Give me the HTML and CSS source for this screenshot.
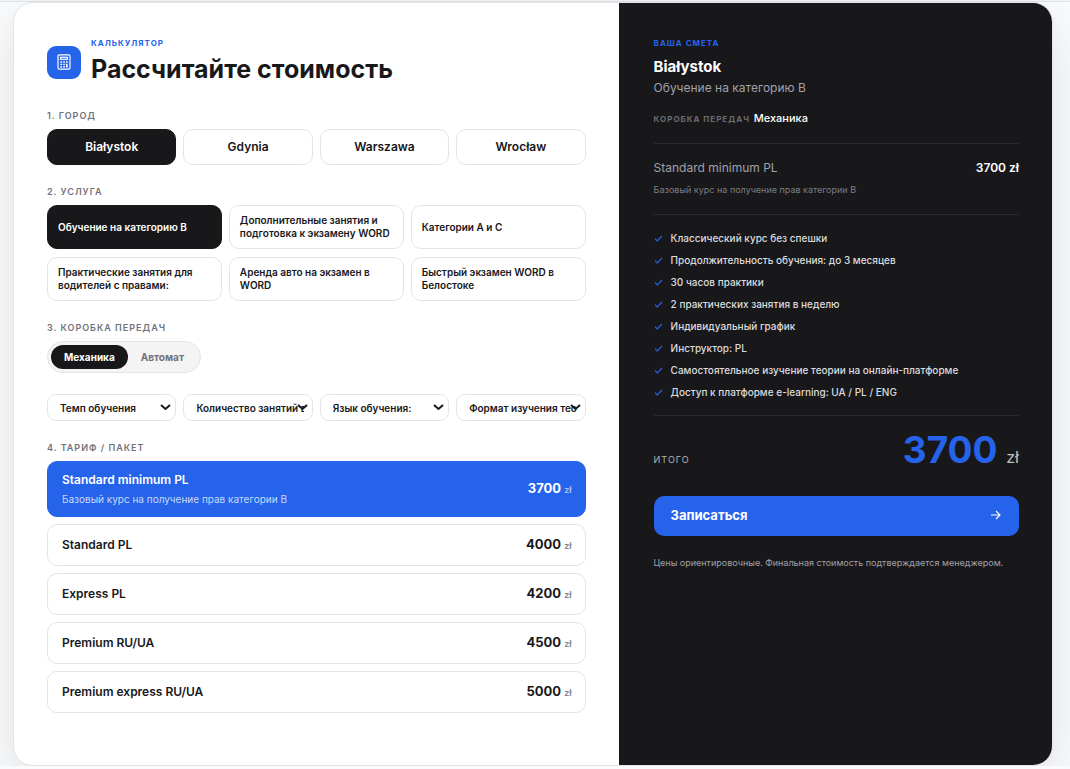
FILE: index.html
```html
<!DOCTYPE html>
<html lang="ru">
<head>
    <meta charset="UTF-8">
    <meta name="viewport" content="width=device-width, initial-scale=1.0">
    <title>Калькулятор стоимости</title>
    <link rel="stylesheet" href="styles.css">
</head>
<body>
    <header class="topbar"></header>

    <main class="calculator">
        <section class="calc-form">
            <div class="calc-head">
                <div class="calc-icon">
                    <svg width="16" height="16" viewBox="0 0 16 16" fill="none" stroke="#fff" stroke-width="1.2">
                        <rect x="2" y=".8" width="12" height="14.4" rx="1.2"/>
                        <rect x="4.5" y="3.3" width="7" height="2"/>
                        <path d="M4.4 8h1.7M7.2 8h1.7M4.4 10.4h1.7M7.2 10.4h1.7M4.4 12.8h1.7M7.2 12.8h1.7M10 8h1.7" stroke-width="1.4"/>
                        <path d="M10.8 9.7v3.8" stroke-width="1.7"/>
                    </svg>
                </div>
                <div>
                    <p class="eyebrow">Калькулятор</p>
                    <h1>Рассчитайте стоимость</h1>
                </div>
            </div>

            <div class="group">
                <h2 class="label">1. Город</h2>
                <div class="cities">
                    <button type="button" class="option active">Białystok</button>
                    <button type="button" class="option">Gdynia</button>
                    <button type="button" class="option">Warszawa</button>
                    <button type="button" class="option">Wrocław</button>
                </div>
            </div>

            <div class="group">
                <h2 class="label">2. Услуга</h2>
                <div class="services">
                    <button type="button" class="option active">Обучение на категорию B</button>
                    <button type="button" class="option">Дополнительные занятия и подготовка к экзамену WORD</button>
                    <button type="button" class="option">Категории A и C</button>
                    <button type="button" class="option">Практические занятия для водителей с правами:</button>
                    <button type="button" class="option">Аренда авто на экзамен в WORD</button>
                    <button type="button" class="option">Быстрый экзамен WORD в Белостоке</button>
                </div>
            </div>

            <div class="group">
                <h2 class="label">3. Коробка передач</h2>
                <div class="gearbox">
                    <button type="button" class="active">Механика</button>
                    <button type="button">Автомат</button>
                </div>
            </div>

            <div class="group filters">
                <div class="select">
                    <select aria-label="Темп обучения"><option>Темп обучения</option></select>
                    <svg width="11" height="7" viewBox="0 0 11 7"><path d="M1 1l4.5 4L10 1"/></svg>
                </div>
                <div class="select">
                    <select aria-label="Количество занятий в неделю"><option>Количество занятий в неделю:</option></select>
                    <svg width="11" height="7" viewBox="0 0 11 7"><path d="M1 1l4.5 4L10 1"/></svg>
                </div>
                <div class="select">
                    <select aria-label="Язык обучения"><option>Язык обучения:</option></select>
                    <svg width="11" height="7" viewBox="0 0 11 7"><path d="M1 1l4.5 4L10 1"/></svg>
                </div>
                <div class="select">
                    <select aria-label="Формат изучения теории"><option>Формат изучения теории:</option></select>
                    <svg width="11" height="7" viewBox="0 0 11 7"><path d="M1 1l4.5 4L10 1"/></svg>
                </div>
            </div>

            <div class="group">
                <h2 class="label">4. Тариф / пакет</h2>
                <div class="plans">
                    <button type="button" class="plan active">
                        <span class="plan-text">
                            <span class="plan-name">Standard minimum PL</span>
                            <span class="plan-note">Базовый курс на получение прав категории B</span>
                        </span>
                        <span class="plan-price">3700 <small>zł</small></span>
                    </button>
                    <button type="button" class="plan">
                        <span class="plan-name">Standard PL</span>
                        <span class="plan-price">4000 <small>zł</small></span>
                    </button>
                    <button type="button" class="plan">
                        <span class="plan-name">Express PL</span>
                        <span class="plan-price">4200 <small>zł</small></span>
                    </button>
                    <button type="button" class="plan">
                        <span class="plan-name">Premium RU/UA</span>
                        <span class="plan-price">4500 <small>zł</small></span>
                    </button>
                    <button type="button" class="plan">
                        <span class="plan-name">Premium express RU/UA</span>
                        <span class="plan-price">5000 <small>zł</small></span>
                    </button>
                </div>
            </div>
        </section>

        <aside class="summary">
            <p class="eyebrow">Ваша смета</p>
            <h2 class="summary-city">Białystok</h2>
            <p class="summary-service">Обучение на категорию B</p>
            <p class="summary-gear"><span>Коробка передач</span> Механика</p>

            <div class="summary-plan">
                <div class="summary-row">
                    <span>Standard minimum PL</span>
                    <strong>3700 zł</strong>
                </div>
                <p>Базовый курс на получение прав категории B</p>
            </div>

            <ul class="features">
                <li><svg width="9" height="7" viewBox="0 0 9 7"><path d="M1 3.6l2.3 2.3L8 1"/></svg>Классический курс без спешки</li>
                <li><svg width="9" height="7" viewBox="0 0 9 7"><path d="M1 3.6l2.3 2.3L8 1"/></svg>Продолжительность обучения: до 3 месяцев</li>
                <li><svg width="9" height="7" viewBox="0 0 9 7"><path d="M1 3.6l2.3 2.3L8 1"/></svg>30 часов практики</li>
                <li><svg width="9" height="7" viewBox="0 0 9 7"><path d="M1 3.6l2.3 2.3L8 1"/></svg>2 практических занятия в неделю</li>
                <li><svg width="9" height="7" viewBox="0 0 9 7"><path d="M1 3.6l2.3 2.3L8 1"/></svg>Индивидуальный график</li>
                <li><svg width="9" height="7" viewBox="0 0 9 7"><path d="M1 3.6l2.3 2.3L8 1"/></svg>Инструктор: PL</li>
                <li><svg width="9" height="7" viewBox="0 0 9 7"><path d="M1 3.6l2.3 2.3L8 1"/></svg>Самостоятельное изучение теории на онлайн-платформе</li>
                <li><svg width="9" height="7" viewBox="0 0 9 7"><path d="M1 3.6l2.3 2.3L8 1"/></svg>Доступ к платформе e-learning: UA / PL / ENG</li>
            </ul>

            <div class="total">
                <span class="total-label">Итого</span>
                <span class="total-price">3700 <small>zł</small></span>
            </div>

            <button type="button" class="submit">
                Записаться
                <svg width="11" height="10" viewBox="0 0 11 10"><path d="M1 5h9M6 1l4 4-4 4"/></svg>
            </button>
            <p class="disclaimer">Цены ориентировочные. Финальная стоимость подтверждается менеджером.</p>
        </aside>
    </main>
</body>
</html>
```

FILE: styles.css
```css
* {
    margin: 0;
    padding: 0;
    box-sizing: border-box;
}

body {
    font-family: 'Inter', sans-serif;
    background: #fafbfc;
    color: #18181b;
    overflow-x: hidden;
}

button,
select {
    font-family: inherit;
    color: inherit;
    cursor: pointer;
}

.topbar {
    height: 2px;
    background: #f3f6f9;
    border-bottom: 1px solid #e1e5ea;
}

.calculator {
    display: grid;
    grid-template-columns: 1.395fr 1fr;
    margin: 0 17px 0 13px;
    background: #fff;
    border: 1px solid #e2e4e7;
    border-radius: 20px;
    overflow: hidden;
    box-shadow: 0 16px 48px rgba(0, 0, 0, 0.11);
}

.calc-form {
    padding: 33px 33px 31px;
}

.calc-head {
    display: flex;
    align-items: center;
    gap: 10px;
    margin-bottom: 22px;
}

.calc-icon {
    display: flex;
    align-items: center;
    justify-content: center;
    width: 34px;
    height: 33px;
    background: #2563eb;
    border-radius: 9px;
}

.eyebrow {
    font-size: 8px;
    line-height: 14px;
    font-weight: 700;
    letter-spacing: 1px;
    text-transform: uppercase;
    color: #2563eb;
}

h1 {
    font-size: 25px;
    line-height: 38px;
    font-weight: 700;
}

.group {
    margin-bottom: 21px;
}

.label {
    margin-bottom: 7px;
    font-size: 9px;
    line-height: 12px;
    font-weight: 600;
    letter-spacing: 1px;
    text-transform: uppercase;
    color: #71717a;
}

.cities,
.filters {
    display: grid;
    grid-template-columns: repeat(4, 1fr);
    gap: 7px;
}

.services {
    display: grid;
    grid-template-columns: repeat(3, 1fr);
    gap: 8px 7px;
}

.option,
.plan {
    background: #fff;
    border: 1px solid #e4e4e7;
    border-radius: 10px;
}

.option.active {
    background: #18181b;
    border-color: #18181b;
    color: #fff;
}

.cities .option {
    height: 36px;
    padding-bottom: 2px;
    font-size: 12px;
    font-weight: 600;
}

.services .option {
    padding: 8px 10px;
    font-size: 10px;
    line-height: 13px;
    font-weight: 600;
    text-align: left;
}

.gearbox {
    display: inline-flex;
    padding: 3px;
    background: #f4f4f5;
    border: 1px solid #e4e4e7;
    border-radius: 16px;
    vertical-align: top;
}

.gearbox button {
    height: 24px;
    padding: 0 13px;
    font-size: 10px;
    font-weight: 700;
    color: #71717a;
    background: none;
    border: none;
    border-radius: 12px;
}

.gearbox .active {
    color: #fff;
    background: #18181b;
}

.select {
    position: relative;
}

.select select {
    display: block;
    width: 100%;
    height: 27px;
    padding: 0 8px 0 12px;
    font-size: 10px;
    font-weight: 600;
    background: #fff;
    border: 1px solid #e4e4e7;
    border-radius: 9px;
    appearance: none;
}

.select svg {
    position: absolute;
    top: 10px;
    right: 5px;
    fill: none;
    stroke: #18181b;
    stroke-width: 2;
    pointer-events: none;
}

.plans {
    display: flex;
    flex-direction: column;
    gap: 7px;
}

.plan {
    display: flex;
    align-items: center;
    justify-content: space-between;
    min-height: 42px;
    padding: 9px 13px 9px 14px;
    text-align: left;
}

.plan.active {
    background: #2563eb;
    border-color: #2563eb;
    color: #fff;
}

.plan-name,
.plan-note {
    display: block;
}

.plan-name {
    font-size: 12px;
    line-height: 18px;
    font-weight: 600;
}

.plan-note {
    margin-top: 2px;
    font-size: 10px;
    line-height: 16px;
    color: #c8d8fa;
}

.plan-price {
    font-size: 13px;
    line-height: 18px;
    font-weight: 700;
}

.plan-price small {
    font-size: 9px;
    font-weight: 600;
    color: #85858c;
}

.plan.active small {
    color: #a8c1f7;
}

.summary {
    padding: 33px 33px 33px 35px;
    background: #18181b;
    color: #fff;
}

.summary-city {
    margin-top: 7px;
    font-size: 15px;
    line-height: 20px;
    font-weight: 700;
}

.summary-service {
    margin-top: 3px;
    font-size: 12px;
    line-height: 16px;
    color: #a1a1aa;
}

.summary-gear {
    margin-top: 14px;
    padding-bottom: 16px;
    font-size: 11px;
    line-height: 16px;
    font-weight: 500;
    border-bottom: 1px solid #2b2b2e;
}

.summary-gear span {
    margin-right: 1px;
    font-size: 8px;
    font-weight: 700;
    letter-spacing: 1px;
    text-transform: uppercase;
    color: #6c6c70;
}

.summary-plan {
    padding: 16px 0;
    border-bottom: 1px solid #2b2b2e;
}

.summary-row {
    display: flex;
    justify-content: space-between;
    font-size: 12px;
    line-height: 16px;
    color: #a1a1aa;
}

.summary-row strong {
    font-weight: 600;
    color: #fff;
}

.summary-plan p {
    margin-top: 6px;
    font-size: 9px;
    line-height: 16px;
    color: #7d7d82;
}

.features {
    padding: 12px 0;
    list-style: none;
    border-bottom: 1px solid #2b2b2e;
}

.features li {
    display: flex;
    align-items: center;
    gap: 8px;
    font-size: 10px;
    line-height: 22px;
    font-weight: 500;
    color: #dcdcde;
}

.features svg {
    fill: none;
    stroke: #2563eb;
    stroke-width: 1.2;
}

.total {
    display: flex;
    align-items: baseline;
    justify-content: space-between;
    padding: 10px 0 15px;
}

.total-label {
    font-size: 9px;
    letter-spacing: 1px;
    text-transform: uppercase;
    color: #b4b4b8;
}

.total-price {
    font-size: 37px;
    line-height: 48px;
    font-weight: 700;
    color: #2563eb;
}

.total-price small {
    font-size: 16px;
    font-weight: 400;
    color: #c0c0c4;
}

.submit {
    display: flex;
    align-items: center;
    justify-content: space-between;
    width: 100%;
    height: 40px;
    padding: 0 18px 2px 17px;
    font-size: 13px;
    font-weight: 700;
    color: #fff;
    background: #2563eb;
    border: none;
    border-radius: 10px;
}

.submit svg {
    fill: none;
    stroke: #fff;
    stroke-width: 1.1;
}

.disclaimer {
    margin-top: 19px;
    font-size: 9px;
    line-height: 16px;
    color: #a1a1aa;
}
```
